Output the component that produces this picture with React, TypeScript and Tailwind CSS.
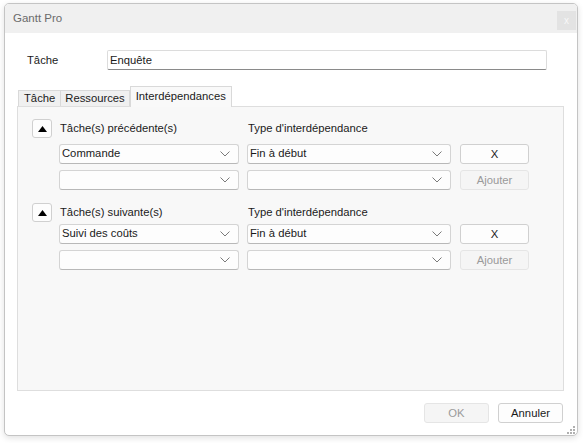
import React from 'react';

const font = { fontFamily: '"Segoe UI", "Liberation Sans", Arial, sans-serif' };

function Chevron() {
    return (
        <svg width="10" height="6" viewBox="0 0 10 6" className="shrink-0">
            <polyline points="0.5,0.5 5,5 9.5,0.5" fill="none" stroke="#7a7a7a" strokeWidth="1" />
        </svg>
    );
}

function Combo({ value, width }: { value?: string; width: string }) {
    return (
        <div className={`${width} h-[20px] bg-[#fdfdfd] border border-[#d4d4d4] border-b-[#b8b8b8] rounded-[3px] flex items-center pl-[2px] pr-[8px]`}>
            <span className="flex-1 text-[11.25px] text-[#1a1a1a] leading-none">{value}</span>
            <Chevron />
        </div>
    );
}

function UpButton() {
    return (
        <div className="w-[20px] h-[19px] bg-[#fdfdfd] border border-[#d0d0d0] rounded-[3px] flex items-center justify-center">
            <svg width="9" height="6" viewBox="0 0 9 6">
                <polygon points="4.5,0 9,6 0,6" fill="#000" />
            </svg>
        </div>
    );
}

function Btn({ label, disabled }: { label: string; disabled?: boolean }) {
    return (
        <div
            className={
                disabled
                    ? 'w-[69px] h-[20px] bg-[#f5f5f5] border border-[#e5e5e5] rounded-[3px] flex items-center justify-center text-[11.25px] text-[#9a9a9a]'
                    : 'w-[69px] h-[20px] bg-[#fdfdfd] border border-[#d0d0d0] rounded-[3px] flex items-center justify-center text-[11.25px] text-[#1a1a1a]'
            }
        >
            {label}
        </div>
    );
}

function Section({ title, first, headGap }: { title: string; first: string; headGap: string }) {
    return (
        <div className="flex flex-col">
            <div className="flex items-center h-[19px]">
                <div className="ml-[14px]"><UpButton /></div>
                <span className="ml-[8px] w-[188px] text-[11.25px] text-[#1a1a1a]">{title}</span>
                <span className="text-[11.25px] text-[#1a1a1a]">Type d'interdépendance</span>
            </div>
            <div className={`flex items-center ${headGap} ml-[41px]`}>
                <Combo value={first} width="w-[180px]" />
                <div className="ml-[8px]"><Combo value="Fin à début" width="w-[204px]" /></div>
                <div className="ml-[9px] mt-[1px]"><Btn label="X" /></div>
            </div>
            <div className="flex items-center mt-[5px] ml-[41px]">
                <Combo width="w-[180px]" />
                <div className="ml-[8px]"><Combo width="w-[204px]" /></div>
                <div className="ml-[9px] mt-[1px]"><Btn label="Ajouter" disabled /></div>
            </div>
        </div>
    );
}

export default function App() {
    return (
        <div className="w-[583px] h-[443px] bg-white pt-[3px] pl-[4px]" style={font}>
            <div className="w-[574px] h-[433px] bg-white border border-[#c4c4c4] rounded-[5px] shadow-[0_2px_6px_rgba(0,0,0,0.12)] flex flex-col overflow-hidden">
                {/* TITLE BAR */}
                <div className="h-[29px] bg-[#f0f0f0] flex items-start shrink-0">
                    <span className="ml-[8px] mt-[6px] text-[11.5px] text-[#6b6b6b]">Gantt Pro</span>
                    <div className="ml-auto mr-[1px] mt-[7px] w-[19px] h-[19px] bg-[#e3e3e3] flex items-center justify-center text-[10px] text-[#f8f8f8] leading-none">x</div>
                </div>

                {/* TASK NAME */}
                <div className="flex items-center mt-[17px] h-[20px]">
                    <span className="ml-[22px] w-[80px] text-[11.25px] text-[#1a1a1a]">Tâche</span>
                    <div className="w-[440px] h-[20px] bg-white border border-[#dcdcdc] border-b-[#8a8a8a] rounded-[2px] flex items-center pl-[2px] text-[11.25px] text-[#1a1a1a]">Enquête</div>
                </div>

                {/* TABS */}
                <div className="flex items-end mt-[15px] ml-[13px] h-[21px]">
                    <div className="h-[16px] px-[5px] bg-[#f0f0f0] border border-b-0 border-[#d9d9d9] text-[11.25px] text-[#1a1a1a] flex items-center">Tâche</div>
                    <div className="h-[16px] px-[4px] bg-[#f0f0f0] border border-b-0 border-l-0 border-[#d9d9d9] text-[11.25px] text-[#1a1a1a] flex items-center">Ressources</div>
                    <div className="h-[21px] px-[5px] bg-[#f9f9f9] border border-b-0 border-[#d9d9d9] text-[11.25px] text-[#1a1a1a] flex items-start pt-[1px] -mb-px relative z-10">Interdépendances</div>
                </div>
                <div className="ml-[12px] w-[547px] h-[285px] bg-[#f8f8f8] border border-[#dedede] flex flex-col pt-[12px]">
                    <Section title="Tâche(s) précédente(s)" first="Commande" headGap="mt-[5px]" />
                    <div className="mt-[13px]">
                        <Section title="Tâche(s) suivante(s)" first="Suivi des coûts" headGap="mt-[1px]" />
                    </div>
                </div>

                {/* FOOTER */}
                <div className="flex mt-[12px] ml-[419px] gap-[9px]">
                    <div className="w-[65px] h-[20px] bg-[#f5f5f5] border border-[#e5e5e5] rounded-[3px] flex items-center justify-center text-[11.25px] text-[#9a9a9a]">OK</div>
                    <div className="w-[65px] h-[20px] bg-[#fdfdfd] border border-[#d0d0d0] rounded-[3px] flex items-center justify-center text-[11.25px] text-[#1a1a1a]">Annuler</div>
                </div>
                <div className="flex justify-end mt-auto mr-[2px] mb-[1px]">
                    <svg width="8" height="8" viewBox="0 0 8 8">
                        <rect x="6" y="0" width="2" height="2" fill="#b0b0b0" />
                        <rect x="3" y="3" width="2" height="2" fill="#b0b0b0" />
                        <rect x="6" y="3" width="2" height="2" fill="#b0b0b0" />
                        <rect x="0" y="6" width="2" height="2" fill="#b0b0b0" />
                        <rect x="3" y="6" width="2" height="2" fill="#b0b0b0" />
                        <rect x="6" y="6" width="2" height="2" fill="#b0b0b0" />
                    </svg>
                </div>
            </div>
        </div>
    );
}
